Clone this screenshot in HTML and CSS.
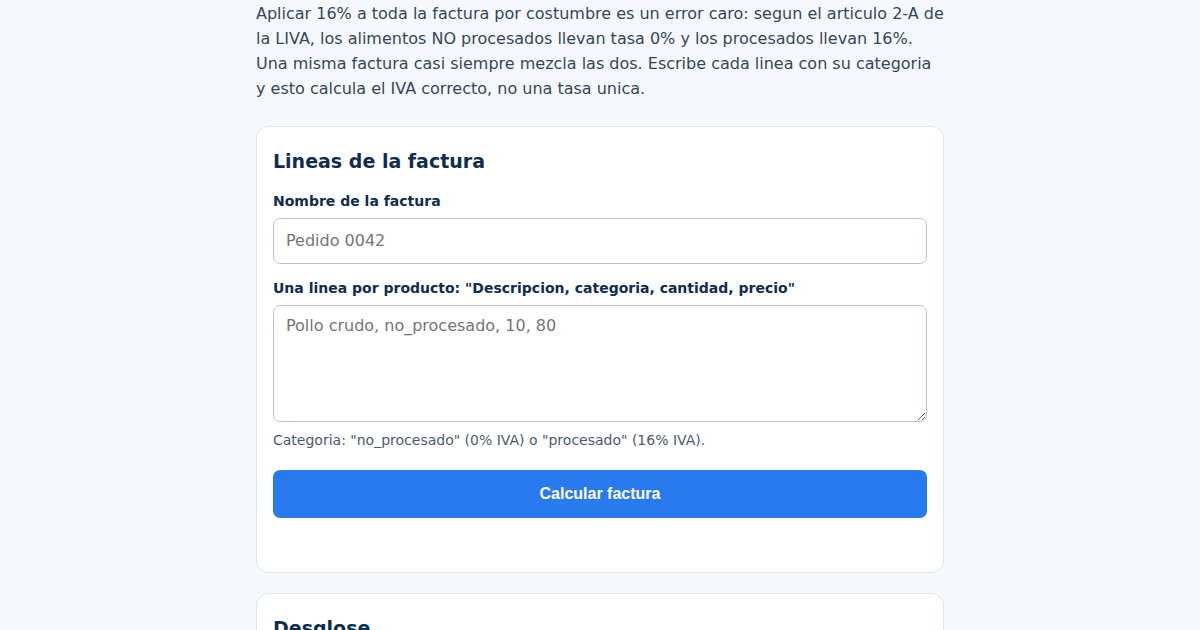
FILE: index.html
```html
<!DOCTYPE html>
<html lang="es">
  <head>
    <meta charset="UTF-8" />
    <meta name="viewport" content="width=device-width, initial-scale=1.0" />
    <title>IVA por linea de factura</title>
    <link rel="stylesheet" href="styles.css">
  </head>
  <body>
    <main class="container">
      <p class="intro">
        Aplicar 16% a toda la factura por costumbre es un error caro: segun el articulo 2-A de
        la LIVA, los alimentos NO procesados llevan tasa 0% y los procesados llevan 16%.
        Una misma factura casi siempre mezcla las dos. Escribe cada linea con su categoria
        y esto calcula el IVA correcto, no una tasa unica.
      </p>

      <section class="card">
        <h2>Lineas de la factura</h2>
        <form id="invoiceForm">
          <div class="form-group">
            <label for="invoiceName">Nombre de la factura</label>
            <input type="text" id="invoiceName" placeholder="Pedido 0042" />
          </div>
          <div class="form-group">
            <label for="lines">Una linea por producto: "Descripcion, categoria, cantidad, precio"</label>
            <textarea id="lines" placeholder="Pollo crudo, no_procesado, 10, 80"></textarea>
            <p class="hint">Categoria: "no_procesado" (0% IVA) o "procesado" (16% IVA).</p>
          </div>
          <button type="submit" class="submit-btn">Calcular factura</button>
        </form>
        <div id="result" class="result"></div>
      </section>

      <section class="card">
        <h2>Desglose</h2>
      </section>
    </main>
  </body>
</html>
```

FILE: styles.css
```css
* {
  box-sizing: border-box;
}
body {
  font-family: "DejaVu Sans", sans-serif;
  margin: 0;
  background-color: #f5f9fd;
  color: #34465c;
}
.container {
  max-width: 688px;
  margin: 0 auto;
}
.intro {
  font-size: 16px;
  line-height: 25px;
  margin: 1px 0 25px;
}
.card {
  background-color: white;
  border: 1px solid #dce5f0;
  border-radius: 12px;
  padding: 20px 16px;
  margin-bottom: 20px;
}
h2 {
  color: #0f2d4f;
  font-size: 19px;
  line-height: 28px;
  margin: 0 0 16px;
}
.form-group {
  margin-bottom: 14px;
}
label {
  display: block;
  font-size: 14px;
  line-height: 20px;
  font-weight: bold;
  color: #0f2d4f;
  margin-bottom: 7px;
}
input[type="text"],
textarea {
  width: 100%;
  padding: 11px 12px;
  border: 1px solid #b9c5d7;
  border-radius: 7px;
  font-size: 16px;
  font-family: inherit;
  color: #1f2d3d;
  background: white;
}
input[type="text"] {
  height: 46px;
  padding-bottom: 12px;
  padding-top: 10px;
}
textarea {
  height: 117px;
  line-height: 20px;
  padding-top: 10px;
  resize: vertical;
  display: block;
}
::placeholder {
  color: #757575;
}
.hint {
  font-size: 14px;
  line-height: 20px;
  color: #4a5b70;
  margin: 8px 0 0;
}
.form-group:last-of-type {
  margin-bottom: 20px;
}
.submit-btn {
  display: block;
  width: 100%;
  height: 48px;
  background-color: #2a7aef;
  color: white;
  border: none;
  border-radius: 7px;
  font-family: "Liberation Sans", Arial, sans-serif;
  font-size: 16px;
  font-weight: bold;
  cursor: pointer;
}
.result {
  min-height: 34px;
}
```
